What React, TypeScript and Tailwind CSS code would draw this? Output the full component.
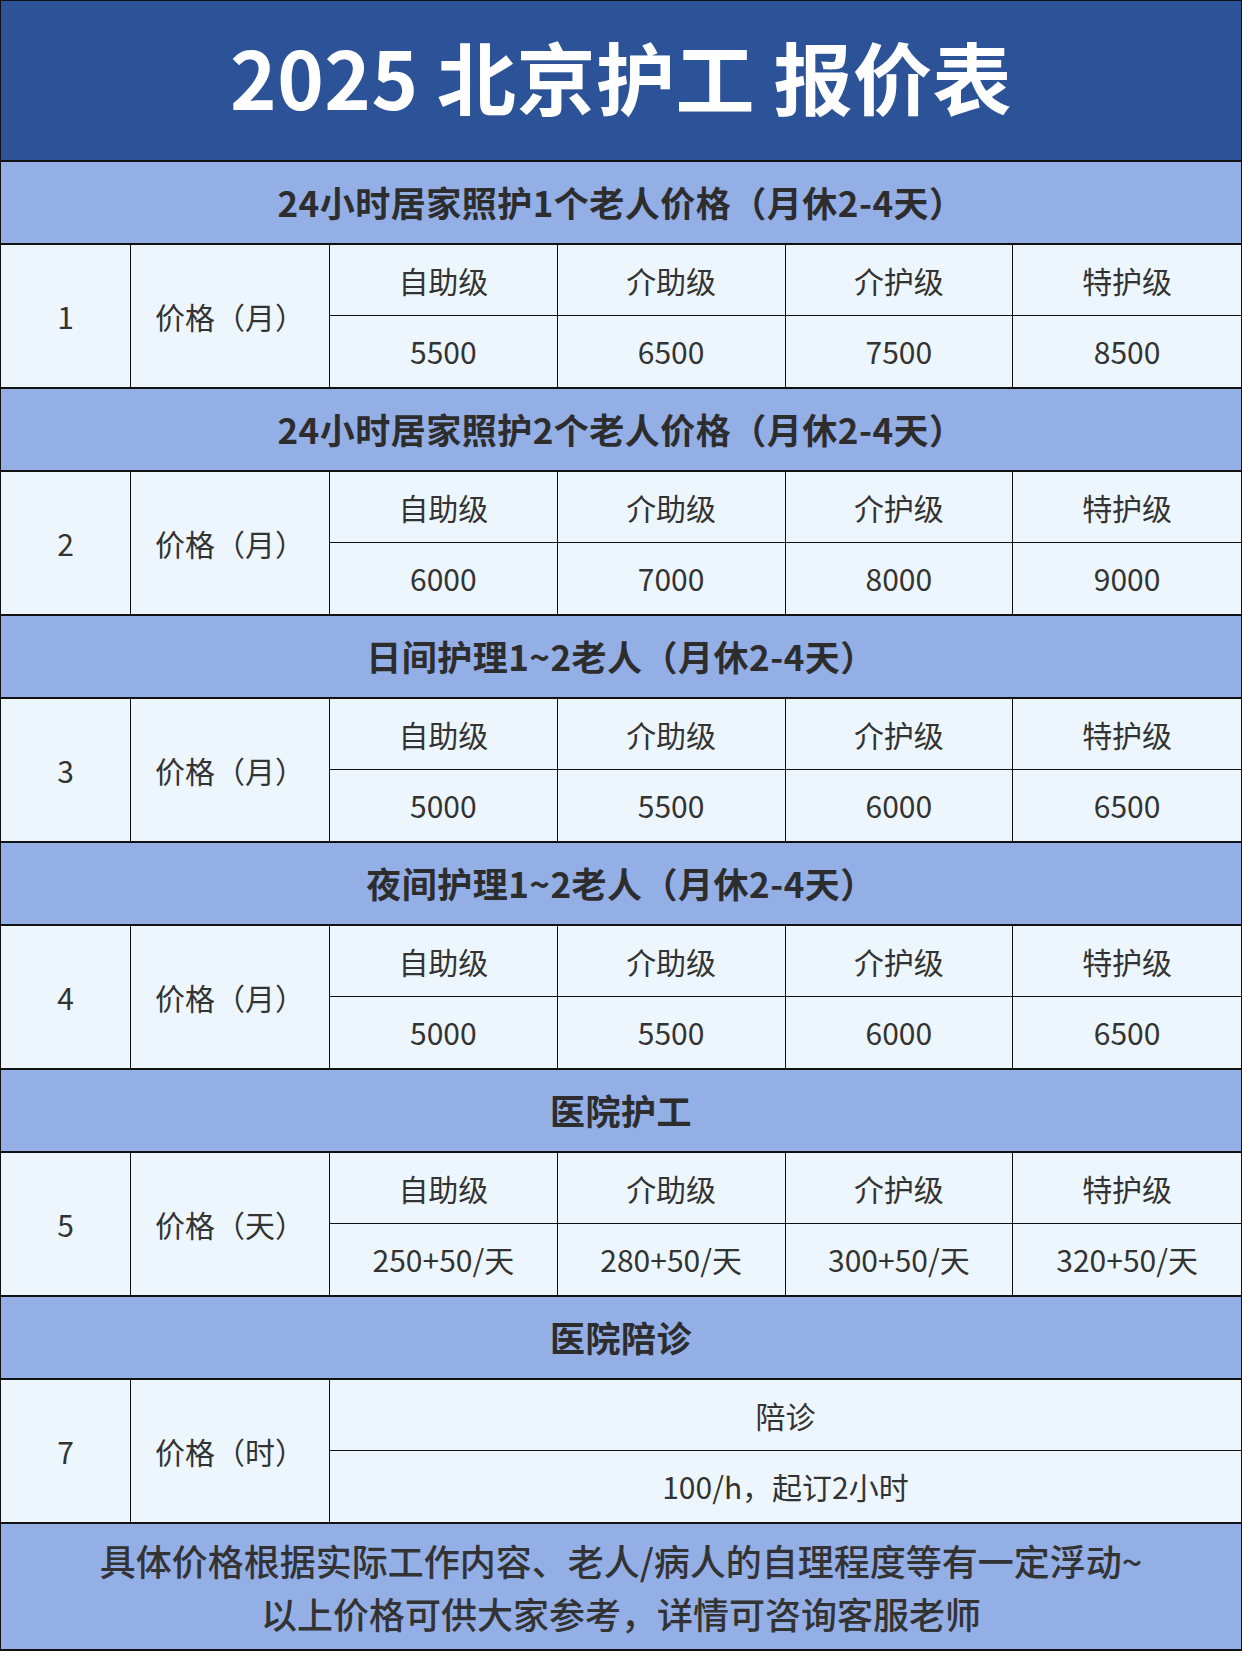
import React from 'react';

type Block = {
  title: string;
  no: string;
  unit: string;
  levels: string[];
  prices: string[];
};

const levels = ['自助级', '介助级', '介护级', '特护级'];

const blocks: Block[] = [
  { title: '24小时居家照护1个老人价格（月休2-4天）', no: '1', unit: '价格（月）', levels, prices: ['5500', '6500', '7500', '8500'] },
  { title: '24小时居家照护2个老人价格（月休2-4天）', no: '2', unit: '价格（月）', levels, prices: ['6000', '7000', '8000', '9000'] },
  { title: '日间护理1~2老人（月休2-4天）', no: '3', unit: '价格（月）', levels, prices: ['5000', '5500', '6000', '6500'] },
  { title: '夜间护理1~2老人（月休2-4天）', no: '4', unit: '价格（月）', levels, prices: ['5000', '5500', '6000', '6500'] },
  { title: '医院护工', no: '5', unit: '价格（天）', levels, prices: ['250+50/天', '280+50/天', '300+50/天', '320+50/天'] },
  { title: '医院陪诊', no: '7', unit: '价格（时）', levels: ['陪诊'], prices: ['100/h，起订2小时'] },
];

const SectionHeader = ({ title }: { title: string }) => (
  <div className="h-[83px] flex items-center justify-center bg-[#94aee6] border-b-2 border-[#111] text-[35px] font-bold text-[#2d2d2d] tracking-[0.5px]">
    {title}
  </div>
);

const DataBlock = ({ b }: { b: Block }) => {
  const single = b.levels.length === 1;
  return (
    <div
      className={
        single
          ? 'grid grid-cols-[130px_199px_1fr] grid-rows-[1fr_1fr] h-[144px] bg-[#eef6fd] border-b-2 border-[#111] text-[30px] text-[#333]'
          : 'grid grid-cols-[130px_199px_1fr_1fr_1fr_1fr] grid-rows-[1fr_1fr] h-[144px] bg-[#eef6fd] border-b-2 border-[#111] text-[30px] text-[#333]'
      }
    >
      <div className="row-span-2 flex items-center justify-center border-r border-[#111]">{b.no}</div>
      <div className="row-span-2 flex items-center justify-center border-r border-[#111]">{b.unit}</div>
      {b.levels.map((l, i) => (
        <div
          key={'l' + i}
          className={
            i < b.levels.length - 1
              ? 'flex items-center justify-center border-b border-r border-[#111]'
              : 'flex items-center justify-center border-b border-[#111]'
          }
        >
          {l}
        </div>
      ))}
      {b.prices.map((p, i) => (
        <div
          key={'p' + i}
          className={
            i < b.prices.length - 1
              ? 'flex items-center justify-center border-r border-[#111]'
              : 'flex items-center justify-center'
          }
        >
          {p}
        </div>
      ))}
    </div>
  );
};

const App = () => {
  return (
    <div
      className="w-[1242px] h-[1660px] bg-white"
      style={{ fontFamily: '"Noto Sans CJK SC", "Noto Sans", sans-serif' }}
    >
      <div className="border border-[#111] border-b-0">
        <div className="h-[161px] flex items-center justify-center bg-[#2c5298] border-b-2 border-[#111]">
          <h1 className="text-[79px] font-bold text-white leading-none tracking-[0.5px] pb-[10px]">2025 北京护工 报价表</h1>
        </div>
        {blocks.map((b, i) => (
          <React.Fragment key={i}>
            <SectionHeader title={b.title} />
            <DataBlock b={b} />
          </React.Fragment>
        ))}
        <div className="h-[127px] flex flex-col items-center justify-center bg-[#94aee6] border-b-2 border-[#111] text-[36px] font-medium text-[#333] leading-[53px]">
          <p>具体价格根据实际工作内容、老人/病人的自理程度等有一定浮动~</p>
          <p>以上价格可供大家参考，详情可咨询客服老师</p>
        </div>
      </div>
    </div>
  );
};

export default App;
